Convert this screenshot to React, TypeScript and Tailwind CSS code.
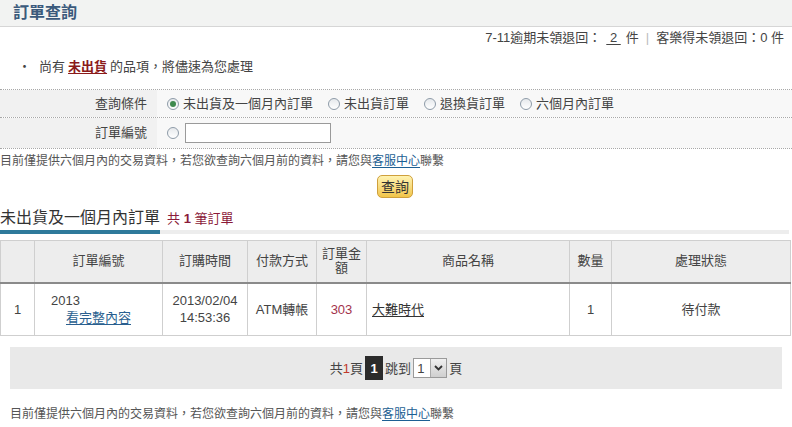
import React from "react";

const FONT = "font-['Liberation_Sans','Noto_Sans_CJK_TC',sans-serif]";

function Radio({ checked = false }: { checked?: boolean }) {
  return (
    <span className="inline-flex w-[12px] h-[12px] rounded-full border border-[#8e9ba8] bg-gradient-to-b from-[#e6e9ec] to-white items-center justify-center shrink-0">
      {checked && <span className="w-[6px] h-[6px] rounded-full bg-[#3f8a4e]" />}
    </span>
  );
}

function Option({ label, checked = false }: { label: string; checked?: boolean }) {
  return (
    <span className="inline-flex items-center gap-[4px] mr-[15px]">
      <Radio checked={checked} />
      <span>{label}</span>
    </span>
  );
}

export default function App() {
  const th = "border border-[#cfcfcf] border-b-2 border-b-[#8a8a8a] bg-[#ededed] font-normal text-center align-middle leading-[14px] px-[4px]";
  const td = "border border-[#cfcfcf] text-center align-middle leading-[17px]";
  return (
    <div className={`w-[792px] h-[427px] overflow-hidden bg-white text-[13px] text-[#444] ${FONT}`}>
      {/* header */}
      <div className="h-[27px] bg-[#f2f3f2] border-b border-[#d6d6d6] flex items-center pl-[13px]">
        <span className="text-[16px] font-bold text-[#3b5a7c] leading-none">訂單查詢</span>
      </div>
      {/* right info */}
      <div className="h-[20px] flex items-center justify-end pr-[8px] leading-none">
        <span>7-11逾期未領退回：</span>
        <span className="underline underline-offset-2 mx-[5px]">&nbsp;2&nbsp;</span>
        <span>件</span>
        <span className="text-[#bbb] mx-[7px]">|</span>
        <span>客樂得未領退回：0 件</span>
      </div>
      {/* bullet */}
      <div className="mt-[10px] h-[19px] flex items-center pl-[18px] leading-none">
        <span className="mr-[8px]">・</span>
        <span>尚有 </span>
        <span className="font-bold text-[#8b1a1a] underline underline-offset-2 mx-[3px]">未出貨</span>
        <span> 的品項，將儘速為您處理</span>
      </div>
      {/* form */}
      <div className="mt-[13px] border-t border-dotted border-[#a8a8a8]">
        <div className="flex h-[28px] border-b border-dotted border-[#a8a8a8]">
          <div className="w-[157px] bg-[#f1f1f1] flex items-center justify-end pr-[10px]">查詢條件</div>
          <div className="flex-1 bg-[#f8f8f8] flex items-center pl-[10px]">
            <Option label="未出貨及一個月內訂單" checked />
            <Option label="未出貨訂單" />
            <Option label="退換貨訂單" />
            <Option label="六個月內訂單" />
          </div>
        </div>
        <div className="flex h-[31px] border-b border-dotted border-[#a8a8a8]">
          <div className="w-[157px] bg-[#f1f1f1] flex items-center justify-end pr-[10px]">訂單編號</div>
          <div className="flex-1 bg-[#f8f8f8] flex items-center pl-[10px] gap-[6px]">
            <Radio />
            <div className="w-[146px] h-[20px] border border-[#9a9a9a] bg-white" />
          </div>
        </div>
      </div>
      {/* note */}
      <div className="h-[24px] flex items-center text-[12px] text-[#555] leading-none">
        <span>目前僅提供六個月內的交易資料，若您欲查詢六個月前的資料，請您與</span>
        <span className="text-[#1d5f93] underline underline-offset-2">客服中心</span>
        <span>聯繫</span>
      </div>
      {/* button */}
      <div className="mt-[2px] flex justify-center">
        <div className="w-[36px] h-[23px] rounded-[5px] border border-[#cfa03c] bg-gradient-to-b from-[#fff3b0] to-[#f1c548] flex items-center justify-center text-[14px] text-[#333] leading-none ml-[-2px]">
          查詢
        </div>
      </div>
      {/* section title */}
      <div className="mt-[9px] h-[22px] flex items-center leading-none">
        <span className="text-[16px] text-[#333]">未出貨及一個月內訂單</span>
        <span className="ml-[7px] text-[13px] text-[#8b1a3a]">
          共 <b>1</b> 筆訂單
        </span>
      </div>
      <div className="mt-[1px] flex">
        <div className="w-[160px] h-[4px] bg-[#2e7a9b]" />
        <div className="flex-1 h-[4px] bg-[#ededed] mr-[3px]" />
      </div>
      {/* table */}
      <table className="mt-[6px] border-collapse table-fixed w-[790px] text-[13px] text-[#444]">
        <colgroup>
          <col className="w-[34px]" />
          <col className="w-[128px]" />
          <col className="w-[85px]" />
          <col className="w-[69px]" />
          <col className="w-[50px]" />
          <col className="w-[203px]" />
          <col className="w-[42px]" />
          <col className="w-[179px]" />
        </colgroup>
        <thead>
          <tr className="h-[42px]">
            <th className={th}></th>
            <th className={th}>訂單編號</th>
            <th className={th}>訂購時間</th>
            <th className={th}>付款方式</th>
            <th className={th}>訂單金額</th>
            <th className={th}>商品名稱</th>
            <th className={th}>數量</th>
            <th className={th}>處理狀態</th>
          </tr>
        </thead>
        <tbody>
          <tr className="h-[53px]">
            <td className={td}>1</td>
            <td className={td}>
              <div className="text-left pl-[16px]">2013</div>
              <div className="text-[#2a5f8f] underline underline-offset-2">看完整內容</div>
            </td>
            <td className={td}>
              <div>2013/02/04</div>
              <div>14:53:36</div>
            </td>
            <td className={td}>ATM轉帳</td>
            <td className={`${td} text-[#a3324c]`}>303</td>
            <td className={`${td} !text-left pl-[5px]`}>
              <span className="text-[#333] underline underline-offset-2">大難時代</span>
            </td>
            <td className={td}>1</td>
            <td className={td}>待付款</td>
          </tr>
        </tbody>
      </table>
      {/* pagination */}
      <div className="mt-[11px] mx-[10px] h-[42px] bg-[#e9e9e9] flex items-center justify-center leading-none">
        <span>共</span>
        <span className="text-[#c0392b]">1</span>
        <span>頁</span>
        <span className="mx-[2px] w-[18px] h-[24px] bg-[#2b2b2b] text-white font-bold flex items-center justify-center">1</span>
        <span>跳到</span>
        <div className="mx-[2px] w-[34px] h-[20px] border border-[#9a9a9a] bg-white flex">
          <span className="flex-1 flex items-center pl-[3px]">1</span>
          <span className="w-[16px] bg-gradient-to-b from-[#f0f0f0] to-[#cfcfcf] border-l border-[#aaa] flex items-center justify-center">
            <svg width="9" height="6" viewBox="0 0 9 6">
              <path d="M1 1 L4.5 4.5 L8 1" stroke="#333" strokeWidth="1.8" fill="none" />
            </svg>
          </span>
        </div>
        <span>頁</span>
      </div>
      {/* footer */}
      <div className="mt-[16px] h-[18px] flex items-center pl-[10px] text-[12px] text-[#555] leading-none">
        <span>目前僅提供六個月內的交易資料，若您欲查詢六個月前的資料，請您與</span>
        <span className="text-[#1d5f93] underline underline-offset-2">客服中心</span>
        <span>聯繫</span>
      </div>
    </div>
  );
}
